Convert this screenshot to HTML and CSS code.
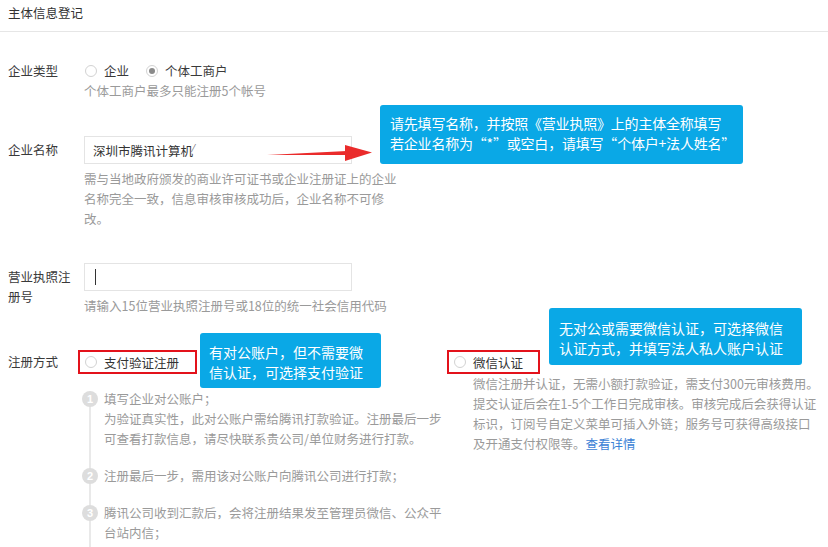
FILE: index.html
```html
<!DOCTYPE html>
<html lang="zh-CN">
<head>
<meta charset="utf-8">
<title>主体信息登记</title>
<link rel="stylesheet" href="styles.css">
</head>
<body>
<div class="page">
  <div class="title">主体信息登记</div>
  <div class="form">
    <div class="row row-type">
      <div class="label">企业类型</div>
      <div class="field">
        <div class="radios">
          <span class="radio"><span class="dot"></span>企业</span>
          <span class="radio checked"><span class="dot"></span>个体工商户</span>
        </div>
        <div class="hint">个体工商户最多只能注册5个帐号</div>
      </div>
    </div>

    <div class="row row-input">
      <div class="label">企业名称</div>
      <div class="field">
        <div class="input">深圳市腾讯计算机<span class="ime">⁄</span></div>
        <div class="hint">需与当地政府颁发的商业许可证书或企业注册证上的企业<br>名称完全一致，信息审核审核成功后，企业名称不可修<br>改。</div>
      </div>
    </div>

    <div class="row row-input">
      <div class="label">营业执照注册号</div>
      <div class="field">
        <div class="input"><span class="caret"></span></div>
        <div class="hint">请输入15位营业执照注册号或18位的统一社会信用代码</div>
      </div>
    </div>

    <div class="row row-method">
      <div class="label">注册方式</div>
      <div class="methods">
        <div class="method-col col-pay">
          <div class="option pay"><span class="dot"></span>支付验证注册</div>
          <ol class="steps">
            <li class="step"><span class="num">1</span><div class="step-text">填写企业对公账户；<br>为验证真实性，此对公账户需给腾讯打款验证。注册最后一步<br>可查看打款信息，请尽快联系贵公司/单位财务进行打款。</div></li>
            <li class="step"><span class="num">2</span><div class="step-text">注册最后一步，需用该对公账户向腾讯公司进行打款；</div></li>
            <li class="step"><span class="num">3</span><div class="step-text">腾讯公司收到汇款后，会将注册结果发至管理员微信、公众平<br>台站内信；</div></li>
          </ol>
        </div>
        <div class="method-col col-wx">
          <div class="option wx"><span class="dot"></span>微信认证</div>
          <div class="desc">微信注册并认证，无需小额打款验证，需支付300元审核费用。<br>提交认证后会在1-5个工作日完成审核。审核完成后会获得认证<br>标识，订阅号自定义菜单可插入外链；服务号可获得高级接口<br>及开通支付权限等。<a class="link" href="#">查看详情</a></div>
        </div>
      </div>
    </div>
  </div>

  <svg class="arrow" width="112" height="24" viewBox="0 0 112 24">
    <polygon points="2,13 82,9 82,13" fill="#ea2b2b"/>
    <polygon points="80,3 107,10.5 80,19" fill="#ea2b2b"/>
  </svg>

  <div class="tip tip-name">请先填写名称，并按照《营业执照》上的主体全称填写<br>若企业名称为“*”或空白，请填写“个体户+法人姓名”</div>
  <div class="tip tip-pay">有对公账户，但不需要微信认证，可选择支付验证</div>
  <div class="tip tip-wx">无对公或需要微信认证，可选择微信认证方式，并填写法人私人账户认证</div>
</div>
</body>
</html>
```

FILE: styles.css
```css
* {
  box-sizing: border-box;
}

html,
body {
  margin: 0;
  padding: 0;
  overflow: hidden;
  background: #ffffff;
}

body {
  font-family: "Noto Sans CJK SC", "Microsoft YaHei", sans-serif;
  font-size: 12.5px;
  color: #3a3a3a;
}

.page {
  position: relative;
  width: 828px;
  height: 547px;
  overflow: hidden;
}

.title {
  height: 32px;
  line-height: 26px;
  padding-left: 8px;
  color: #333;
  border-bottom: 1px solid #e6e6e6;
}

.form {
  padding-top: 29px;
}

.row {
  display: flex;
}

.row-type {
  margin-bottom: 35px;
}

.row-input {
  margin-bottom: 34px;
}

.label {
  flex: none;
  width: 68px;
  margin: 0 8px;
  line-height: 20px;
}

.row-input .label {
  padding-top: 4px;
}

.row-method .label {
  line-height: 24px;
}

.radios {
  display: flex;
  gap: 17px;
  line-height: 20px;
  padding-left: 1px;
}

.radio {
  display: flex;
  align-items: center;
  gap: 7px;
}

.dot {
  flex: none;
  width: 12px;
  height: 12px;
  border: 1px solid #d2d2d2;
  border-radius: 50%;
  display: flex;
  align-items: center;
  justify-content: center;
  background: #fff;
}

.radio.checked .dot::after {
  content: "";
  width: 6px;
  height: 6px;
  border-radius: 50%;
  background: #8a8a8a;
}

.hint {
  color: #9a9a9a;
  line-height: 20px;
}

.input {
  display: flex;
  align-items: center;
  width: 268px;
  height: 28px;
  border: 1px solid #e4e4e4;
  padding: 0 8px;
  color: #333;
}

.input + .hint {
  margin-top: 5px;
}

.ime {
  color: #777;
  font-size: 10px;
  margin-top: -6px;
}

.caret {
  width: 1px;
  height: 16px;
  margin-left: 2px;
  background: #333;
}

.methods {
  display: flex;
}

.col-pay {
  width: 363px;
}

.col-wx {
  flex: 1;
}

.option {
  display: flex;
  align-items: center;
  gap: 7px;
  height: 24px;
  border: 2px solid #e3121b;
  padding-left: 5px;
  color: #333;
}

.option.pay {
  width: 119px;
  margin-left: -6px;
}

.option.wx {
  width: 93px;
}

.desc {
  padding-left: 26px;
  color: #9a9a9a;
  line-height: 20px;
}

.link {
  color: #3b82d6;
  text-decoration: none;
}

.steps {
  position: relative;
  list-style: none;
  margin: 15px 0 0 -2px;
  padding: 0;
  display: flex;
  flex-direction: column;
  gap: 17px;
  color: #9a9a9a;
  line-height: 20px;
}

.steps::before {
  content: "";
  position: absolute;
  left: 7px;
  top: 4px;
  bottom: -10px;
  width: 2px;
  background: #e9e9e9;
}

.step {
  position: relative;
  display: flex;
  gap: 6px;
}

.num {
  position: relative;
  z-index: 1;
  flex: none;
  width: 16px;
  height: 16px;
  margin-top: 2px;
  border-radius: 50%;
  background: #dddddd;
  color: #fff;
  font-family: "Liberation Sans", sans-serif;
  font-size: 11px;
  font-weight: bold;
  line-height: 16px;
  text-align: center;
}

.arrow {
  position: absolute;
  left: 265px;
  top: 142px;
}

.tip {
  position: absolute;
  background: #0aa8e6;
  color: #fff;
  font-size: 14px;
  line-height: 20px;
  border-radius: 3px;
}

.tip-name {
  left: 380px;
  top: 105px;
  width: 363px;
  height: 59px;
  padding: 8px 10px;
  white-space: nowrap;
  letter-spacing: -0.2px;
}

.tip-pay {
  left: 200px;
  top: 333px;
  width: 181px;
  height: 55px;
  padding: 9px;
}

.tip-wx {
  left: 549px;
  top: 308px;
  width: 253px;
  height: 57px;
  padding: 10px;
}
```
